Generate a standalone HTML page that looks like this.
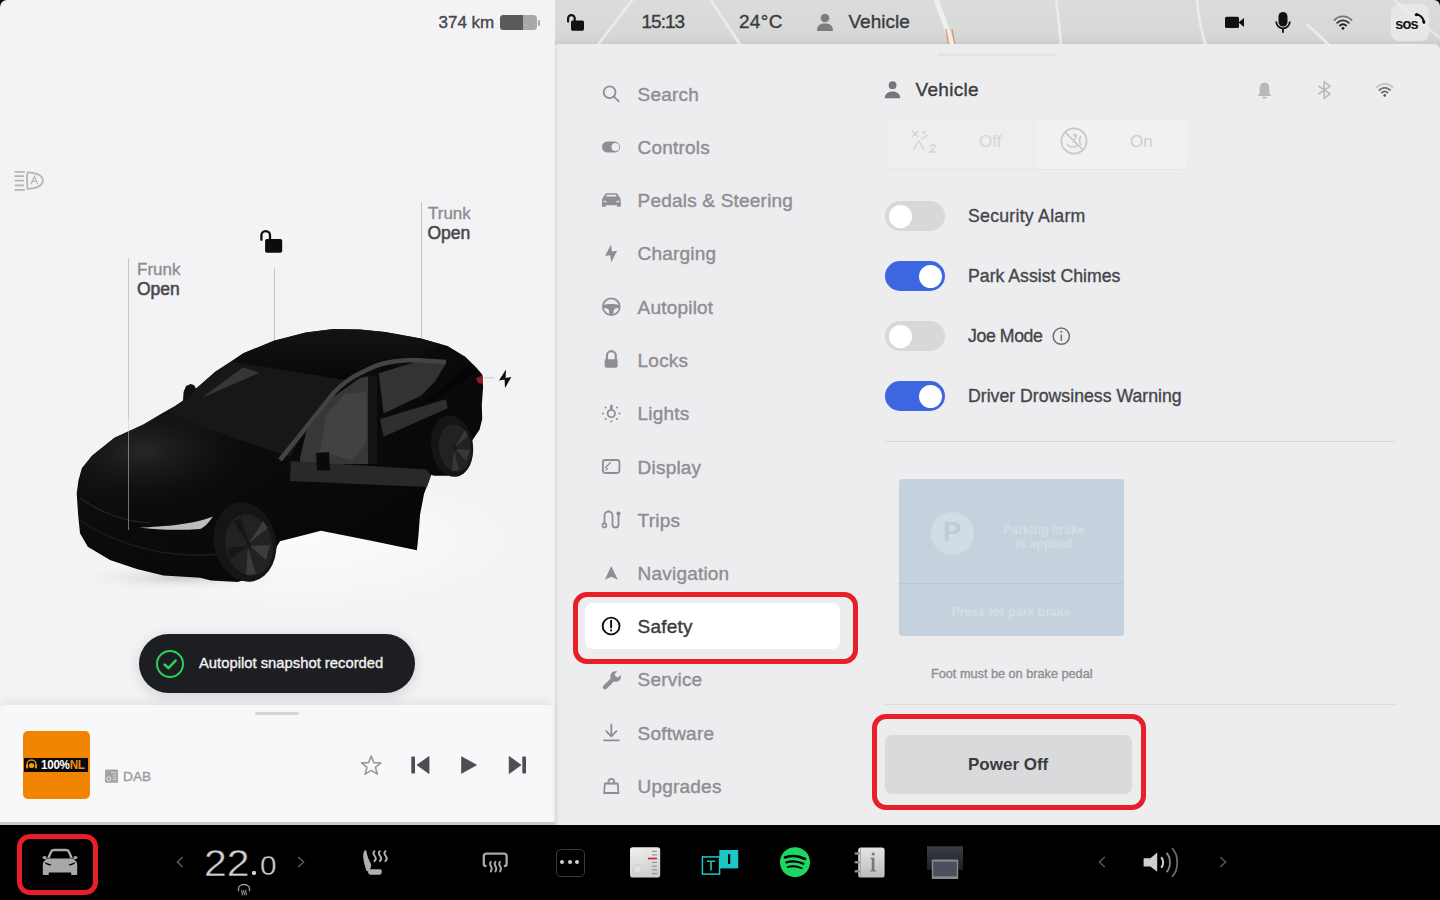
<!DOCTYPE html>
<html><head><meta charset="utf-8">
<style>
*{margin:0;padding:0;box-sizing:border-box}
html,body{width:1440px;height:900px;overflow:hidden;background:#000;font-family:"Liberation Sans",sans-serif;position:relative}
.a{position:absolute}
.t{position:absolute;white-space:nowrap;line-height:1}
.med{-webkit-text-stroke:0.35px currentColor}
#left{position:absolute;left:0;top:0;width:555px;height:825px;background:#f3f3f5;border-top-left-radius:7px;overflow:hidden}
#topbar{position:absolute;left:555px;top:0;width:885px;height:50px;background:#dcdddd;overflow:hidden}
#panel{position:absolute;left:555px;top:44px;width:885px;height:781px;background:#ededf0;border-top-left-radius:4px;border-top-right-radius:6px}
#bottom{position:absolute;left:0;top:825px;width:1440px;height:75px;background:#000}
.menu{position:absolute;left:637.6px;font-size:19px;color:#8e8e93;white-space:nowrap;line-height:1;-webkit-text-stroke:0.4px currentColor;letter-spacing:0.2px}
.mi{position:absolute;overflow:visible}
.lbl{position:absolute;left:968px;font-size:17.7px;color:#46464b;white-space:nowrap;line-height:1;-webkit-text-stroke:0.35px currentColor;letter-spacing:0.2px}
.tog{position:absolute;left:885px;width:60px;height:30px;border-radius:15px;background:#d8d8da}
.tog::after{content:"";position:absolute;top:3.5px;left:3.5px;width:23px;height:23px;border-radius:50%;background:#fff}
.tog.on{background:#3d67e0}
.tog.on::after{left:33.5px}
.red{position:absolute;border:5px solid #e81e28}
</style></head><body>
<div id="left"></div>

<div id="bottom"></div>


<!-- ============ TOP BAR ============ -->
<svg class="a" style="left:555px;top:0" width="885" height="60" viewBox="555 0 885 60">
  <defs><linearGradient id="tbg" gradientUnits="userSpaceOnUse" x1="0" y1="0" x2="0" y2="46"><stop offset="0" stop-color="#dbdcdb"/><stop offset="0.7" stop-color="#d7d8d8"/><stop offset="0.88" stop-color="#d2d3d4"/><stop offset="0.97" stop-color="#c8c9ca"/><stop offset="1" stop-color="#c8c9ca"/></linearGradient></defs>
  <rect x="555" y="0" width="885" height="60" fill="url(#tbg)"/>
  <g stroke="#ebebeb" stroke-width="2.8" fill="none" stroke-linecap="butt">
    <path d="M597 46 L633 -1"/>
    <path d="M710 -1 L741 46"/>
    <path d="M1056 -1 Q1059 20 1061 46" stroke-width="2.6"/>
    <path d="M1197 -1 Q1199 25 1206 46" stroke-width="2.6"/>
    <path d="M1307 24 L1330 46" stroke-width="3"/>
  </g>
  <path d="M936 -1 L953 46" stroke="#efefef" stroke-width="5"/>
  <path d="M946 29 L949 46 M952 29 L955 46" stroke="#e8905a" stroke-width="1.3"/>
  <rect x="1391" y="4" width="38" height="37" rx="8" fill="#e7e7e7"/>
  <path d="M1393 -1 L1440 38" stroke="#f0f0f0" stroke-width="2" opacity="0.7"/><path d="M1434 0 H1440 V6 A6 6 0 0 0 1434 0Z" fill="#000"/>
</svg>
<div id="panel"></div>
<!-- lock -->
<svg class="a" style="left:565px;top:13px" width="22" height="20" viewBox="0 0 22 20">
  <path d="M3.1 8.6 V5.35 A3.3 3.3 0 0 1 9.7 5.35 V8.5" stroke="#111" stroke-width="2.2" fill="none" stroke-linecap="round"/>
  <rect x="6" y="7.6" width="13" height="10.1" rx="1.6" fill="#111"/>
</svg>
<div class="t med" style="left:641.5px;top:12px;font-size:19px;letter-spacing:-1px;color:#3c3c3e">15:13</div>
<div class="t med" style="left:739px;top:12px;font-size:19px;color:#3c3c3e;letter-spacing:0.3px">24°C</div>
<svg class="a" style="left:816px;top:13px" width="18" height="19" viewBox="0 0 18 19">
  <circle cx="9" cy="5" r="4.3" fill="#7d7d80"/>
  <path d="M1 18 C1 12 4.5 10.5 9 10.5 C13.5 10.5 17 12 17 18 Z" fill="#7d7d80"/>
</svg>
<div class="t med" style="left:848.5px;top:12px;font-size:19px;color:#3c3c3e">Vehicle</div>
<!-- camera -->
<svg class="a" style="left:1224px;top:15px" width="22" height="15" viewBox="0 0 22 15">
  <rect x="1" y="1.8" width="14" height="11.2" rx="1.5" fill="#111"/>
  <path d="M14.5 7.4 L20 3 V12 Z" fill="#111"/>
</svg>
<!-- mic -->
<svg class="a" style="left:1274px;top:11px" width="18" height="23" viewBox="0 0 18 23">
  <rect x="4.5" y="1" width="9" height="14.5" rx="4.5" fill="#111"/>
  <path d="M2.2 10.5 a6.8 6.8 0 0 0 13.6 0" stroke="#111" stroke-width="1.8" fill="none"/>
  <path d="M9 17.3 V21.8" stroke="#111" stroke-width="1.8"/>
</svg>
<!-- wifi -->
<svg class="a" style="left:1333px;top:14px" width="20" height="17" viewBox="0 0 20 17">
  <g fill="none" stroke-width="1.8" stroke-linecap="round">
    <path d="M1.5 6 a12 12 0 0 1 17 0" stroke="#777"/>
    <path d="M4.2 8.8 a8 8 0 0 1 11.6 0" stroke="#333"/>
    <path d="M7 11.5 a4.2 4.2 0 0 1 6 0" stroke="#222"/>
  </g>
  <circle cx="10" cy="14.3" r="1.4" fill="#222"/>
</svg>
<div class="t" style="left:1395.3px;top:17.4px;font-size:14.6px;font-weight:bold;color:#151515;letter-spacing:-0.9px">sos</div>
<svg class="a" style="left:1410px;top:9px" width="20" height="18" viewBox="1410 9 20 18">
  <path d="M1416.2 14.8 C1419.8 14.4 1423 17.4 1423.8 21.6" stroke="#111" stroke-width="2.2" fill="none"/>
  <ellipse cx="1416.6" cy="14.6" rx="1.9" ry="1.5" transform="rotate(-20 1416.6 14.6)" fill="#111"/>
  <ellipse cx="1423.8" cy="22" rx="1.5" ry="1.9" transform="rotate(-20 1423.8 22)" fill="#111"/>
</svg>

<!-- ============ LEFT PANEL ============ -->
<div class="t med" style="left:438.5px;top:13.7px;font-size:17px;color:#46464a">374 km</div>
<div class="a" style="left:500px;top:15px;width:37px;height:14.5px;border-radius:3.5px;background:#a9a9ab;overflow:hidden"><div class="a" style="left:0;top:0;width:23px;height:15px;background:#5a5a5c"></div></div>
<div class="a" style="left:537.8px;top:19.5px;width:2px;height:6px;border-radius:1px;background:#a9a9ab"></div>


<!-- headlight icon -->
<svg class="a" style="left:10px;top:166px" width="40" height="30" viewBox="10 166 40 30">
  <g stroke="#b5b5b8" stroke-width="1.8" fill="none">
    <path d="M14.6 171.8 H24.8 M14.6 176.2 H23.9 M14.6 180.7 H23.9 M14.6 185.3 H23.9 M14.6 189.8 H24.8"/>
    <path d="M27.6 172.3 C35 172.3 42.8 175 42.8 180.6 C42.8 186.2 35 188.9 27.6 188.9 C26.8 185 26.8 176 27.6 172.3 Z"/>
  </g>
  <path d="M31 184.2 L34.4 176.2 L37.9 184.2 M32.3 181.4 H36.5" stroke="#b5b5b8" stroke-width="1.2" fill="none"/>
</svg>
<!-- frunk/trunk labels & lines -->

<div class="a" style="left:274px;top:268px;width:1px;height:74px;background:#c6c6c9"></div>
<div class="a" style="left:420.5px;top:202px;width:1px;height:140px;background:#c6c6c9"></div>
<div class="t med" style="left:137px;top:261px;font-size:17px;color:#8d8d91">Frunk</div>
<div class="t" style="left:137px;top:280.5px;font-size:17.5px;color:#48484c;-webkit-text-stroke:0.55px currentColor">Open</div>
<div class="t med" style="left:428px;top:204.5px;font-size:17px;color:#8d8d91">Trunk</div>
<div class="t" style="left:427.5px;top:224.5px;font-size:17.5px;color:#48484c;-webkit-text-stroke:0.55px currentColor">Open</div>
<svg class="a" style="left:258px;top:227px" width="28" height="28" viewBox="0 0 28 28">
  <path d="M3.4 12.8 V8.4 A4.3 4.3 0 0 1 12 8.4 V13" stroke="#0c0c0c" stroke-width="2.3" fill="none" stroke-linecap="round"/>
  <rect x="7.1" y="12.1" width="17.1" height="13.6" rx="1.8" fill="#0c0c0c"/>
</svg>
<!-- car -->
<svg class="a" style="left:0;top:300px" width="555" height="320" viewBox="0 300 555 320">
  <defs>
    <radialGradient id="shadow" cx="0.5" cy="0.5" r="0.5"><stop offset="0" stop-color="#c8c8cc" stop-opacity="0.9"/><stop offset="1" stop-color="#f3f3f5" stop-opacity="0"/></radialGradient>
    <radialGradient id="glow" cx="0.5" cy="0.5" r="0.5"><stop offset="0" stop-color="#fbfbfc" stop-opacity="1"/><stop offset="0.6" stop-color="#f8f8f9" stop-opacity="0.7"/><stop offset="1" stop-color="#f3f3f5" stop-opacity="0"/></radialGradient>
    <linearGradient id="hood" x1="0" y1="0" x2="1" y2="1"><stop offset="0" stop-color="#161616"/><stop offset="0.45" stop-color="#0b0b0b"/><stop offset="1" stop-color="#050505"/></linearGradient>
    <linearGradient id="roofg" x1="0" y1="0" x2="0" y2="1"><stop offset="0" stop-color="#141414"/><stop offset="1" stop-color="#070707"/></linearGradient>
  </defs>
  <ellipse cx="300" cy="540" rx="250" ry="80" fill="url(#glow)"/>
  <ellipse cx="180" cy="578" rx="110" ry="14" fill="url(#shadow)"/>
  <path fill="url(#hood)" d="M76.7 493.3 L78.5 480.0 L82.0 468.0 L92.2 455.6 L114.4 437.8 L143.3 424.4 L160.0 414.4 L175.0 406.0 L183.0 400.6 L183.6 392.0 L186.0 386.0 L190.6 383.9 L194.0 385.0 L196.0 388.5 L215.6 371.4 L243.3 353.3 L273.9 340.8 L305.8 332.5 L333.6 329.0 L360.0 329.5 L385.0 332.0 L420.9 338.5 L447.6 346.0 L465.3 356.7 L476.0 367.3 L482.2 374.4 L483.1 386.9 L481.8 404.7 L482.2 418.9 L479.6 429.6 L472.4 440.2 L468.9 454.4 L461.8 468.7 L447.6 475.8 L435.0 475.8 L431.0 475.0 L424.0 494.0 L420.0 515.0 L418.5 535.0 L416.9 550.2 L370.0 540.5 L320.9 530.7 L280.0 541.3 L276.5 547.0 L273.3 561.0 L259.0 575.0 L237.8 582.0 L211.0 580.4 L200.0 577.8 L163.3 575.6 L136.7 568.9 L110.0 560.0 L87.8 546.7 L80.0 533.3 L78.2 515.6 Z"/>
  <clipPath id="bodyclip"><path d="M76.7 493.3 L78.5 480.0 L82.0 468.0 L92.2 455.6 L114.4 437.8 L143.3 424.4 L160.0 414.4 L175.0 406.0 L183.0 400.6 L183.6 392.0 L186.0 386.0 L190.6 383.9 L194.0 385.0 L196.0 388.5 L215.6 371.4 L243.3 353.3 L273.9 340.8 L305.8 332.5 L333.6 329.0 L360.0 329.5 L385.0 332.0 L420.9 338.5 L447.6 346.0 L465.3 356.7 L476.0 367.3 L482.2 374.4 L483.1 386.9 L481.8 404.7 L482.2 418.9 L479.6 429.6 L472.4 440.2 L468.9 454.4 L461.8 468.7 L447.6 475.8 L435.0 475.8 L431.0 475.0 L424.0 494.0 L420.0 515.0 L418.5 535.0 L416.9 550.2 L370.0 540.5 L320.9 530.7 L280.0 541.3 L276.5 547.0 L273.3 561.0 L259.0 575.0 L237.8 582.0 L211.0 580.4 L200.0 577.8 L163.3 575.6 L136.7 568.9 L110.0 560.0 L87.8 546.7 L80.0 533.3 L78.2 515.6 Z"/></clipPath>
  <radialGradient id="hoodhl" cx="0.3" cy="0.35" r="0.6"><stop offset="0" stop-color="#2a2a2a" stop-opacity="0.9"/><stop offset="1" stop-color="#0b0b0b" stop-opacity="0"/></radialGradient>
  <path clip-path="url(#bodyclip)" fill="url(#hoodhl)" d="M80 473 C85 455 100 440 130 428 L168.6 412.6 C200 426 240 440 290 457 L280 470 C250 490 210 510 150 522 C120 520 95 505 82 495 Z"/>
  <path clip-path="url(#bodyclip)" d="M80 498 C100 512 125 522 150 523" stroke="#262626" stroke-width="1.2" fill="none"/>
  <path clip-path="url(#bodyclip)" d="M80 520 C95 532 125 545 160 552 C190 556 215 556 228 552" stroke="#1c1c1c" stroke-width="1.5" fill="none"/>
  <path fill="url(#roofg)" d="M232 361.7 L243.3 353.3 L273.9 340.8 L305.8 332.5 L333.6 329 L360 329.5 L385 332 L420.9 338.5 L440 344 L413 360 L386.7 362.7 L360 373.3 L345 380 L290 371 Z" opacity="0.9"/>
  <path fill="#171718" d="M168.6 412.6 L184.0 401.0 L196.0 389.0 L215.6 371.4 L232.0 361.7 L290.0 371.0 L345.0 380.0 L333.3 393.3 L306.7 426.7 L290.0 457.0 L240.0 440.0 L200.0 426.0 Z"/>
  <path fill="#363637" d="M201.7 397.8 L243.3 367.2 L259.3 372.8 L208.6 395 Z"/>
  <path fill="#373738" d="M300.0 458.0 L306.7 430.0 L333.3 397.0 L360.0 378.0 L369.0 376.0 L369.0 464.0 L300.0 464.0 Z"/>
  <path fill="#424243" d="M320.0 452.0 L326.0 415.0 L345.0 394.0 L366.0 392.0 L366.0 444.0 L352.0 460.0 Z"/>
  <rect x="368" y="376" width="9" height="88" fill="#141414"/>
  <path fill="#333334" d="M378.7 373.3 L415.6 362.0 L445.8 363.8 L435.0 381.6 L420.9 395.8 L383.6 413.6 Z"/>
  <path fill="#050505" d="M424.0 403.0 L468.0 366.0 L477.0 371.0 L436.0 400.0 Z"/>
  <path fill="#2f2f30" d="M380.0 418.9 L445.8 399.3 L447.6 408.2 L383.6 436.7 Z"/>
  <path d="M280 460 L306.7 426.7 L333.3 393.3 C342 384 350 378 360 373.3 C370 368 378 364 386.7 362.7 C396 361 405 360 413.3 360 L446 362" stroke="#444445" stroke-width="4.5" fill="none" stroke-linejoin="round"/>
  <path fill="#292929" d="M290.7 461.0 L426.7 469.5 L431.0 475.6 L427.0 487.0 L290.0 481.0 Z"/>
  <path fill="#0a0a0a" d="M316 453 L329 452 L330 471 L317 470 Z"/>
  <ellipse cx="245" cy="542" rx="31" ry="40" transform="rotate(-12 245 542)" fill="#151515"/>
  <ellipse cx="249" cy="545" rx="23.5" ry="31" transform="rotate(-12 249 545)" fill="#222223"/>
  <g fill="#3c3c3d">
    <path d="M249 543 L263 521 L268 528 Z"/>
    <path d="M250 546 L270 545 L266 560 Z"/>
    <path d="M248 548 L256 574 L246 575 Z"/>
  </g>
  <g fill="#161616">
    <path d="M249 544 L233 521 L241 518 Z"/>
    <path d="M248 546 L229 560 L228 548 Z"/>
  </g>
  <circle cx="248.5" cy="545" r="3" fill="#1a1a1a"/>
  <ellipse cx="452" cy="446" rx="21" ry="31" transform="rotate(-8 452 446)" fill="#151515"/>
  <ellipse cx="455" cy="448" rx="16" ry="24" transform="rotate(-8 455 448)" fill="#222223"/>
  <g fill="#383839">
    <path d="M455 447 L465 430 L468 436 Z"/>
    <path d="M455 449 L470 450 L466 461 Z"/>
    <path d="M454 450 L459 470 L452 471 Z"/>
  </g>
  <circle cx="455" cy="448" r="2.2" fill="#1a1a1a"/>
  <path d="M139 527.5 C165 526.5 195 524 213 516.4 C209 522 205 527 200 529 C180 530.5 158 530 139 527.5 Z" fill="#bdbdbe"/>
  <path d="M476 378 L482.8 375.5 L482.8 384 L478 383 Z" fill="#8b1a22"/>
  <path d="M484 377.8 H494" stroke="#c4c8c6" stroke-width="1"/>
  <path d="M506 369.4 L498.9 380.6 L504.6 379.6 L505 388 L511.4 377 L505.6 378 Z" fill="#0c0c0c"/>
</svg>

<div class="a" style="left:127.5px;top:258px;width:1px;height:272px;background:#c6c6c9;opacity:0.55"></div>
<div class="a" style="left:127.5px;top:258px;width:1px;height:160px;background:#c6c6c9"></div>
<!-- left panel divider shadow -->
<div class="a" style="left:555px;top:48px;width:5px;height:777px;background:linear-gradient(90deg,rgba(0,0,0,0.09),rgba(0,0,0,0.03) 40%,rgba(0,0,0,0))"></div>

<!-- ============ MENU ============ -->
<div class="menu" style="top:84.8px">Search</div>
<div class="menu" style="top:137.8px">Controls</div>
<div class="menu" style="top:190.8px">Pedals &amp; Steering</div>
<div class="menu" style="top:243.8px">Charging</div>
<div class="menu" style="top:297.8px">Autopilot</div>
<div class="menu" style="top:350.8px">Locks</div>
<div class="menu" style="top:403.8px">Lights</div>
<div class="menu" style="top:457.8px">Display</div>
<div class="menu" style="top:510.8px">Trips</div>
<div class="menu" style="top:563.8px">Navigation</div>
<div class="a" style="left:585px;top:603.3px;width:255px;height:46px;background:#fff;border-radius:8px"></div>
<div class="menu" style="top:616.8px;color:#3a3a3d">Safety</div>
<div class="menu" style="top:669.8px">Service</div>
<div class="menu" style="top:723.8px">Software</div>
<div class="menu" style="top:776.8px">Upgrades</div>

<!-- menu icons -->
<svg class="a" style="left:595px;top:78px" width="35" height="722" viewBox="595 78 35 722">
  <g fill="none" stroke="#8e8e93" stroke-width="1.8" stroke-linecap="round" stroke-linejoin="round">
    <circle cx="609.6" cy="92.2" r="5.9"/>
    <path d="M614 96.6 L618.8 101.4"/>
    <circle cx="611.3" cy="306.7" r="8.4"/>
    <path d="M606.9 359.5 V355.6 a4.45 4.45 0 0 1 8.9 0 V359.5" stroke-width="2.1"/>
    <circle cx="611.3" cy="413.6" r="3.7"/>
    <rect x="602.9" y="460" width="16.5" height="13" rx="2.4"/>
    <path d="M605.5 467.5 L610.5 462.5 M606 470 L607.5 468.5" stroke-width="1.3"/>
    <path d="M604.5 525 V515.5 a4 4 0 0 1 8 0 V524.5 a3 3 0 0 0 6 0 V514"/>
    <path d="M611.3 724.5 V736 M606.2 731.2 L611.3 736.3 L616.4 731.2 M603.9 740.3 H618.8"/>
    <path d="M608.4 783.6 V781.8 a2.9 2.9 0 0 1 5.8 0 V783.6"/>
    <path d="M604.9 783.5 H617.7 L618.5 793 H604.1 Z"/>
  </g>
  <g fill="#8e8e93">
    <rect x="602" y="141.5" width="18" height="11" rx="5.5"/>
    <path d="M602.4 198.6 L604.8 194.8 C605.5 193.7 606.3 193.3 607.6 193.3 H615.2 C616.5 193.3 617.3 193.7 618 194.8 L620.4 198.6 C620.6 199 620.8 199.8 620.8 200.4 V205.8 C620.8 206.4 620.5 206.8 619.9 206.8 H617.6 C617.1 206.8 616.8 206.4 616.8 205.8 V205.2 H605.9 V205.8 C605.9 206.4 605.6 206.8 605.1 206.8 H602.8 C602.2 206.8 602 206.4 602 205.8 V200.4 C602 199.8 602.2 199 602.4 198.6 Z"/>
    <path d="M610.9 244.6 L605.1 255.9 L610 255.3 L611.3 262.3 L617.1 250.8 L612 251.5 Z"/>
    <path d="M603.4 305 C606 304.2 609 304 611.3 304 C613.6 304 616.6 304.2 619.2 305 L619 308 C616.5 308 614.5 308.6 613.6 310.5 L613.2 315 H609.4 L609 310.5 C608.1 308.6 606.1 308 603.6 308 Z"/>
    <path d="M604.7 359.2 H617.6 V365.8 C617.6 367 617 367.8 615.6 367.8 H606.7 C605.4 367.8 604.7 367 604.7 365.8 Z"/>
    <rect x="610.1" y="404.9" width="2.5" height="4.5"/>
    <circle cx="605.6" cy="407.6" r="1"/><circle cx="617" cy="407.6" r="1"/>
    <circle cx="603" cy="413.4" r="1"/><circle cx="619.5" cy="413.4" r="1"/>
    <circle cx="605.6" cy="419" r="1"/><circle cx="617" cy="419" r="1"/>
    <circle cx="611.3" cy="421.5" r="1"/>
    <circle cx="618.5" cy="513.6" r="2.1"/>
    <path d="M611.3 565.9 L617.8 579.8 L611.3 576.8 L604.8 579.8 Z"/>
    <path d="M603.4 685.6 L610.6 678.4 C609.8 675.4 611 672.6 613.6 671.6 C614.8 671.1 616.2 671.1 617.2 671.4 L614.6 674 L615.6 676.6 L618.2 677.6 L620.8 675 C621.1 676.1 621 677.5 620.6 678.6 C619.6 681.2 616.8 682.4 613.8 681.6 L606.6 688.8 C605.7 689.7 604.4 689.7 603.5 688.8 C602.6 687.9 602.5 686.5 603.4 685.6 Z"/>
  </g>
  <circle cx="615.4" cy="147" r="3.9" fill="#ededf0"/>
  <path d="M606 196.5 L607 194.8 H615.8 L616.8 196.5 Z" fill="#ededf0"/>
  <path d="M603.2 200.4 L606.8 201.4 L606.4 202.4 C605 202.2 603.8 201.8 603.2 201.2 Z M619.6 200.4 L616 201.4 L616.4 202.4 C617.8 202.2 619 201.8 619.6 201.2 Z" fill="#ededf0"/>
  <circle cx="604.4" cy="525.4" r="2" fill="#ededf0" stroke="#8e8e93" stroke-width="1.6"/>
  <!-- safety -->
  <circle cx="611.1" cy="626" r="8.4" fill="none" stroke="#111" stroke-width="1.9"/>
  <path d="M611.1 620.6 V627.6" stroke="#111" stroke-width="1.9" stroke-linecap="round"/>
  <circle cx="611.1" cy="630.4" r="1.05" fill="#111"/>
</svg>

<div class="red" style="left:573px;top:592px;width:285px;height:72px;border-radius:14px"></div>

<!-- ============ CONTENT ============ -->
<div class="tog" style="top:201px"></div><div class="lbl" style="top:207.5px;letter-spacing:0.25px">Security Alarm</div>
<div class="tog on" style="top:261px"></div><div class="lbl" style="top:267.5px;letter-spacing:0px">Park Assist Chimes</div>
<div class="tog" style="top:321px"></div><div class="lbl" style="top:327.5px;letter-spacing:-0.4px">Joe Mode</div>
<div class="tog on" style="top:381px"></div><div class="lbl" style="top:387.5px;letter-spacing:0px">Driver Drowsiness Warning</div>
<div class="a" style="left:885px;top:441px;width:510px;height:1px;background:#d6d6d9"></div>

<div class="a" style="left:899px;top:479px;width:225px;height:157px;background:#c5d2dd;border-radius:3px"></div>
<div class="a" style="left:899px;top:583px;width:225px;height:1px;background:#b9c7d2"></div>

<!-- panel header -->
<div class="a" style="left:937.5px;top:52.8px;width:118px;height:3px;border-radius:1.5px;background:#e4e4e7"></div>
<svg class="a" style="left:880px;top:75px" width="25" height="28" viewBox="880 75 25 28">
  <circle cx="892.6" cy="85.2" r="3.9" fill="#77777b"/>
  <path d="M884.8 98.2 C884.8 93.6 888 91.4 892.6 91.4 C897.2 91.4 900.2 93.6 900.2 98.2 Z" fill="#77777b"/>
</svg>
<div class="t med" style="left:915.5px;top:79.8px;font-size:19px;color:#3c3c3f;letter-spacing:0.3px">Vehicle</div>
<svg class="a" style="left:1250px;top:75px" width="150" height="30" viewBox="1250 75 150 30">
  <path d="M1264.5 82.4 C1261 82.4 1259.6 85.3 1259.6 89 V93.4 L1257.7 96 H1271.3 L1269.4 93.4 V89 C1269.4 85.3 1268 82.4 1264.5 82.4 Z" fill="#b9b9bc"/>
  <rect x="1262.3" y="96.8" width="4.4" height="1.6" rx="0.8" fill="#b9b9bc"/>
  <path d="M1318.3 85.8 L1330 93.6 L1324.2 98.4 V81.6 L1330 86.4 L1318.3 94.2" stroke="#b9b9bc" stroke-width="1.6" fill="none" stroke-linejoin="round"/>
  <g fill="none" stroke-linecap="round">
    <path d="M1376.8 87.2 a11 11 0 0 1 15.8 0" stroke="#c4c4c6" stroke-width="1.8"/>
    <path d="M1379.4 90 a7.4 7.4 0 0 1 10.6 0" stroke="#78787b" stroke-width="1.8"/>
    <path d="M1381.9 92.7 a3.8 3.8 0 0 1 5.6 0" stroke="#66666a" stroke-width="1.8"/>
  </g>
  <circle cx="1384.7" cy="95.4" r="1.3" fill="#555"/>
</svg>
<!-- faded segmented control -->
<div class="a" style="left:885px;top:120px;width:302px;height:48.5px;border-radius:5px;background:#eeeef0;box-shadow:0 1px 1px rgba(0,0,0,0.03)"></div>
<div class="a" style="left:1036.5px;top:120px;width:150px;height:48.5px;border-radius:5px;background:#f1f1f2"></div>
<div class="t" style="left:979px;top:132.5px;font-size:17px;color:#d4d4d6">Off</div>
<div class="t" style="left:1130px;top:132.5px;font-size:17px;color:#cdcdcf">On</div>
<svg class="a" style="left:908px;top:127px" width="34" height="30" viewBox="908 127 34 30">
  <g stroke="#d2d2d4" stroke-width="1.3" fill="none">
    <path d="M912 131 L918 137 M918 131 L912 137"/>
    <path d="M913 150 L919 141 L924 150 M921 139 L928 135"/>
    <path d="M930 147 C931 144 935 144 935 146.5 C935 148 932 150 930 152 H935.5"/>
  </g>
  <circle cx="924" cy="132.5" r="1.6" fill="#d2d2d4"/>
</svg>
<svg class="a" style="left:1058px;top:125px" width="32" height="32" viewBox="1058 125 32 32">
  <circle cx="1074" cy="141" r="12.6" fill="none" stroke="#c6c6c8" stroke-width="1.6"/>
  <path d="M1065 132 L1083 150" stroke="#c6c6c8" stroke-width="1.6"/>
  <path d="M1067 144 C1070 148 1075 148 1078 145 M1077 134.5 L1073 143 M1081 136 C1079 138 1079 142 1081 145" stroke="#c6c6c8" stroke-width="1.4" fill="none"/>
  <circle cx="1074.5" cy="135" r="1.4" fill="#c6c6c8"/>
</svg>
<!-- joe mode info -->
<svg class="a" style="left:1050px;top:325px" width="22" height="22" viewBox="1050 325 22 22">
  <circle cx="1061.3" cy="336.2" r="8.1" fill="none" stroke="#6e6e72" stroke-width="1.5"/>
  <path d="M1061.3 334.4 V340.8" stroke="#6e6e72" stroke-width="1.5"/>
  <circle cx="1061.3" cy="331.8" r="1" fill="#6e6e72"/>
</svg>
<!-- parking brake content -->
<div class="a" style="left:931px;top:511.5px;width:43px;height:43px;border-radius:50%;background:#d2dce5"></div>
<div class="t" style="left:943px;top:519px;font-size:27px;font-weight:bold;color:#bfcbd5">P</div>
<div class="t" style="left:994px;top:523px;width:100px;text-align:center;font-size:12.3px;font-weight:bold;color:#d3dde5;line-height:14px">Parking brake<br>is applied</div>
<div class="t" style="left:951px;top:605.5px;width:120px;text-align:center;font-size:12.3px;font-weight:bold;color:#d3dde5">Press for park brake</div>

<div class="t med" style="left:931px;top:668px;font-size:12.7px;color:#8e8e91">Foot must be on brake pedal</div>
<div class="a" style="left:885px;top:703.5px;width:510px;height:1px;background:#dcdcdf"></div>
<div class="a" style="left:885px;top:735px;width:247px;height:59px;background:#dadadc;border-radius:7px"></div>
<div class="t" style="left:968px;top:756px;font-size:17px;font-weight:bold;color:#3a3a3d">Power Off</div>
<div class="red" style="left:872px;top:714px;width:274px;height:96px;border-radius:14px"></div>

<!-- ============ TOAST ============ -->
<div class="a" style="left:139px;top:634px;width:276px;height:59px;border-radius:30px;background:#1d1e21;box-shadow:0 3px 14px rgba(0,0,0,0.14)"></div>
<div class="a" style="left:155.5px;top:650px;width:28px;height:28px;border-radius:50%;border:2.5px solid #2fce5a"></div>
<svg class="a" style="left:155.5px;top:650px" width="28" height="28" viewBox="0 0 28 28"><path d="M8.6 14.5 L12.4 18.2 L19.6 10.6" stroke="#2fce5a" stroke-width="2.5" fill="none" stroke-linecap="round" stroke-linejoin="round"/></svg>
<div class="t med" style="left:199px;top:656px;font-size:14.8px;color:#f2f2f2">Autopilot snapshot recorded</div>

<!-- ============ MEDIA CARD ============ -->
<div class="a" style="left:0;top:705px;width:553px;height:117px;background:#f8f8fa;border-top-right-radius:5px;border-top-left-radius:5px;box-shadow:0 -4px 10px rgba(0,0,0,0.06)"></div>
<div class="a" style="left:0;top:822px;width:555px;height:3px;background:#c9c9cb"></div>
<div class="a" style="left:255px;top:712px;width:44px;height:3px;border-radius:2px;background:#d5d5d8"></div>
<div class="a" style="left:22.5px;top:731px;width:67.5px;height:67.5px;background:#f18500;border-radius:5px;overflow:hidden">
  <div class="a" style="left:1.7px;top:27px;width:63.8px;height:13.6px;background:#0a0a0a"></div>
</div>
<svg class="a" style="left:25px;top:759px" width="13" height="12" viewBox="0 0 13 12">
  <path d="M2 7 V5.5 a4.5 4.5 0 0 1 9 0 V7" stroke="#e98a1a" stroke-width="1.4" fill="none"/>
  <rect x="1" y="5.5" width="2.2" height="4" rx="1" fill="#e98a1a"/><rect x="9.8" y="5.5" width="2.2" height="4" rx="1" fill="#e98a1a"/>
  <circle cx="6.5" cy="6.5" r="2.6" fill="#d9a020"/>
</svg>
<div class="t" style="left:40.5px;top:758px;font-size:13.5px;font-weight:bold;color:#fff;transform:scaleX(0.86);transform-origin:0 0;letter-spacing:-0.3px">100%<span style="color:#f08a10">NL</span></div>
<svg class="a" style="left:104px;top:769px" width="15" height="15" viewBox="0 0 15 15">
  <rect x="1" y="0.6" width="13" height="13.2" rx="1.2" fill="#a3a3a6"/>
  <circle cx="4.8" cy="9.8" r="2" fill="none" stroke="#e8e8ea" stroke-width="1"/>
  <path d="M9 6 H12.6 M9 8.3 H12.6 M9 10.6 H12.6 M7 3.5 H12.6" stroke="#e8e8ea" stroke-width="0.7"/>
</svg>
<!-- media controls -->
<svg class="a" style="left:355px;top:750px" width="180" height="30" viewBox="355 750 180 30">
  <path d="M371.2 756 L373.8 762.6 L380.9 762.9 L375.4 767.3 L377.3 774.2 L371.2 770.3 L365.1 774.2 L367 767.3 L361.5 762.9 L368.6 762.6 Z" fill="none" stroke="#9a9a9d" stroke-width="1.6" stroke-linejoin="round"/>
  <rect x="411.3" y="756.5" width="3.7" height="17.1" rx="0.8" fill="#4e4e52"/>
  <path d="M429 756.5 V773.6 L417 765 Z" fill="#4e4e52" stroke="#4e4e52" stroke-width="0.8" stroke-linejoin="round"/>
  <path d="M461.6 756.8 V773.3 L476.4 765 Z" fill="#4e4e52" stroke="#4e4e52" stroke-width="0.8" stroke-linejoin="round"/>
  <path d="M509.2 756.5 V773.6 L521 765 Z" fill="#4e4e52" stroke="#4e4e52" stroke-width="0.8" stroke-linejoin="round"/>
  <rect x="522.3" y="756.5" width="3.7" height="17.1" rx="0.8" fill="#4e4e52"/>
</svg>
<div class="t med" style="left:123px;top:770px;font-size:13.7px;color:#9a9a9d">DAB</div>

<!-- ============ BOTTOM BAR ============ -->
<div class="red" style="left:17px;top:833.5px;width:81px;height:61px;border-radius:13px"></div>
<div class="t" style="left:204.2px;top:845.5px;font-size:36.5px;color:#cfcfcf;-webkit-text-stroke:0.45px #000;transform:scaleX(1.12);transform-origin:0 0">22</div>
<div class="a" style="left:252.3px;top:871px;width:4.2px;height:4.4px;border-radius:1.4px;background:#cfcfcf"></div>
<div class="t" style="left:259.6px;top:853.2px;font-size:27px;color:#cfcfcf;-webkit-text-stroke:0.35px #000;transform:scaleX(1.1);transform-origin:0 0">0</div>


<!-- car icon -->
<svg class="a" style="left:35px;top:840px" width="50" height="45" viewBox="35 840 50 45">
  <path d="M48.4 858 L51.2 851.5 C51.8 850.4 52.8 850 54 850 H66 C67.2 850 68.2 850.4 68.8 851.5 L71.6 858" stroke="#a8a8a8" stroke-width="2.4" fill="none"/>
  <ellipse cx="44.6" cy="857.6" rx="2" ry="1.6" fill="#a8a8a8"/><ellipse cx="75.4" cy="857.6" rx="2" ry="1.6" fill="#a8a8a8"/>
  <path d="M46.5 858.5 H73.5 L76.5 862 C77 862.8 77.2 863.8 77.2 865 V874 C77.2 874.7 76.8 875.1 76.1 875.1 H72.2 C71.5 875.1 71.2 874.7 71.2 874 V872.6 H48.8 V874 C48.8 874.7 48.5 875.1 47.8 875.1 H43.9 C43.2 875.1 42.8 874.7 42.8 874 V865 C42.8 863.8 43 862.8 43.5 862 Z" fill="#a8a8a8"/>
  <path d="M45 862.2 L51.5 864.8 L50.5 865.4 C48.5 865.2 46.2 864.4 45 863.2 Z M75 862.2 L68.5 864.8 L69.5 865.4 C71.5 865.2 73.8 864.4 75 863.2 Z" fill="#000"/>
</svg>
<div class="t" style="left:176px;top:856px;font-size:0"><svg width="8" height="12" viewBox="0 0 8 12"><path d="M6.8 1 L1.4 6 L6.8 11" stroke="#5a5a5a" stroke-width="1.5" fill="none"/></svg></div>
<div class="t" style="left:297px;top:856px;font-size:0"><svg width="8" height="12" viewBox="0 0 8 12"><path d="M1.2 1 L6.6 6 L1.2 11" stroke="#5a5a5a" stroke-width="1.5" fill="none"/></svg></div>
<svg class="a" style="left:234px;top:882px" width="20" height="16" viewBox="0 0 20 16">
  <path d="M4.5 9.2 V6.5 a5.5 4 0 0 1 11 0 V9.2" stroke="#9a9a9a" stroke-width="1.3" fill="none"/>
  <path d="M8 8 q-0.8 1.3 0 2.6 q0.8 1.3 0 2.6 M10 8 q-0.8 1.3 0 2.6 q0.8 1.3 0 2.6 M12 8 q-0.8 1.3 0 2.6 q0.8 1.3 0 2.6" stroke="#9a9a9a" stroke-width="1.1" fill="none"/>
</svg>
<!-- seat heater -->
<svg class="a" style="left:355px;top:843px" width="40" height="37" viewBox="355 843 40 37">
  <path d="M364.2 851 C365 849.8 366.4 850.2 366.5 851.5 C367 856 369 860 371 864.2 C371.6 866 370.6 869.5 368.4 871 C367.4 871.5 366.6 871.2 366.2 870 C364.8 866 363.4 861 363.2 856.5 C363.1 854.5 363.5 852.3 364.2 851 Z" fill="#b0b0b0"/>
  <path d="M368.2 870.2 C369 869.3 370 869.2 371.5 869.2 H380 C381.3 869.2 381.8 870 381.8 871.6 C381.8 873.6 381 874.7 379.6 874.7 H370.6 C369.2 874.7 368.4 873.8 368.1 872.6 Z" fill="#b0b0b0"/>
  <g stroke="#b0b0b0" stroke-width="1.9" fill="none" stroke-linecap="round">
    <path d="M374.4 851.2 C372.6 852.8 373.6 854.6 374.8 856 C376 857.5 376.2 859.4 374.4 861.2"/>
    <path d="M379.8 851.2 C378 852.8 379 854.6 380.2 856 C381.4 857.5 381.6 859.4 379.8 861.2"/>
    <path d="M385.4 851.2 C383.6 852.8 384.6 854.6 385.8 856 C387 857.5 387.2 859.4 385.4 861.2"/>
  </g>
</svg>
<!-- defrost -->
<svg class="a" style="left:475px;top:845px" width="40" height="35" viewBox="475 845 40 35">
  <path d="M485.6 866 C484.4 866 483.8 865.2 483.8 864 V856.2 C483.8 854.4 484.8 853.6 486.6 853.6 H503.8 C505.6 853.6 506.6 854.4 506.6 856.2 V864 C506.6 865.2 506 866 504.8 866" stroke="#a8a8a8" stroke-width="2.3" fill="none" stroke-linecap="round"/>
  <g stroke="#a8a8a8" stroke-width="1.9" fill="none" stroke-linecap="round">
    <path d="M490.8 861.8 C489.4 863.4 490 865 491 866.4 C492 867.8 492 869.6 490.8 871.4"/>
    <path d="M495.4 861.8 C494 863.4 494.6 865 495.6 866.4 C496.6 867.8 496.6 869.6 495.4 871.4"/>
    <path d="M500 861.8 C498.6 863.4 499.2 865 500.2 866.4 C501.2 867.8 501.2 869.6 500 871.4"/>
  </g>
</svg>
<!-- dots -->
<div class="a" style="left:556px;top:848.5px;width:28.5px;height:28.5px;border:1.8px solid #3c3c3e;border-radius:5px"></div>
<div class="a" style="left:560.4px;top:859.5px;width:4px;height:4px;border-radius:50%;background:#cfcfcf"></div>
<div class="a" style="left:568px;top:859.5px;width:4px;height:4px;border-radius:50%;background:#cfcfcf"></div>
<div class="a" style="left:575.4px;top:859.5px;width:4px;height:4px;border-radius:50%;background:#cfcfcf"></div>
<!-- radio app -->
<svg class="a" style="left:628px;top:845px" width="35" height="35" viewBox="628 845 35 35">
  <defs><linearGradient id="rg" x1="0" y1="0" x2="0.3" y2="1"><stop offset="0" stop-color="#f0f0f0"/><stop offset="1" stop-color="#cfcfcf"/></linearGradient></defs>
  <rect x="630" y="847.2" width="30.2" height="30.3" rx="2.8" fill="url(#rg)"/>
  <circle cx="637.6" cy="869.3" r="4.2" fill="#e2e2e2" stroke="#c4c4c4" stroke-width="0.8"/>
  <g stroke="#8a8a8a" stroke-width="1"><path d="M652 851.3 H657 M652 854.9 H657 M652 862.4 H657 M652 866.2 H657 M652 869.8 H657 M652 873.6 H657"/></g>
  <path d="M648 858.5 H657" stroke="#c8202a" stroke-width="1.6"/>
</svg>
<!-- T I app -->
<svg class="a" style="left:700px;top:848px" width="40" height="28" viewBox="700 848 40 28">
  <rect x="719.3" y="850" width="18.9" height="18.4" fill="#1fc6c6"/>
  <rect x="728" y="854.2" width="2.2" height="9.8" fill="#000"/>
  <rect x="702.4" y="856.9" width="17.2" height="17.2" fill="#000" stroke="#1fc6c6" stroke-width="1.5"/>
  <path d="M707 861.2 H715 M711 861.2 V870.5" stroke="#1fc6c6" stroke-width="1.6"/>
</svg>
<!-- spotify -->
<svg class="a" style="left:778px;top:845px" width="34" height="34" viewBox="778 845 34 34">
  <circle cx="795" cy="862.2" r="15" fill="#1ed760"/>
  <g stroke="#000" stroke-linecap="round" fill="none">
    <path d="M785 857.4 C791 855.4 799 855.8 805 859" stroke-width="2.6"/>
    <path d="M786.4 862.4 C791.5 860.8 798 861.2 803.4 863.8" stroke-width="2.2"/>
    <path d="M787.6 867 C792 865.8 797.4 866.2 801.8 868.2" stroke-width="1.8"/>
  </g>
</svg>
<!-- info app -->
<svg class="a" style="left:852px;top:845px" width="35" height="35" viewBox="852 845 35 35">
  <defs><linearGradient id="ig" x1="0" y1="0" x2="0" y2="1"><stop offset="0" stop-color="#e4e4e4"/><stop offset="1" stop-color="#bdbdbd"/></linearGradient></defs>
  <rect x="858.2" y="847.6" width="26.4" height="29.9" rx="2.6" fill="url(#ig)"/>
  <path d="M860.5 848 V877" stroke="#a0a0a0" stroke-width="0.8"/>
  <g fill="#8c8c8c"><rect x="854.6" y="852.2" width="5.4" height="2.6" rx="1.2"/><rect x="854.6" y="860.9" width="5.4" height="2.6" rx="1.2"/><rect x="854.6" y="870" width="5.4" height="2.6" rx="1.2"/></g>
  <circle cx="873.2" cy="854" r="1.6" fill="#777"/>
  <path d="M870.6 857.8 H874.4 V870.2 H876 V871.6 H870.2 V870.2 H871.8 V859.2 H870.6 Z" fill="#777"/>
</svg>
<!-- screen app -->
<svg class="a" style="left:925px;top:844px" width="40" height="37" viewBox="925 844 40 37">
  <defs><linearGradient id="sg" x1="0" y1="0" x2="0" y2="1"><stop offset="0" stop-color="#3a3e46"/><stop offset="1" stop-color="#1e2024"/></linearGradient></defs>
  <rect x="927" y="846.3" width="36" height="23.6" fill="url(#sg)"/>
  <rect x="931.8" y="859.4" width="26.4" height="19.5" rx="1" fill="#8a8a8a"/>
  <rect x="933.2" y="861.6" width="23.6" height="14.8" fill="#4a505c"/>
</svg>
<!-- volume -->
<div class="t" style="left:1098px;top:856px;font-size:0"><svg width="8" height="12" viewBox="0 0 8 12"><path d="M6.8 1 L1.4 6 L6.8 11" stroke="#555" stroke-width="1.5" fill="none"/></svg></div>
<div class="t" style="left:1219px;top:856px;font-size:0"><svg width="8" height="12" viewBox="0 0 8 12"><path d="M1.2 1 L6.6 6 L1.2 11" stroke="#555" stroke-width="1.5" fill="none"/></svg></div>
<svg class="a" style="left:1140px;top:845px" width="42" height="35" viewBox="1140 845 42 35">
  <path d="M1143.6 858.2 H1150.4 L1157.2 852.5 V871.8 L1150.4 866.6 H1143.6 Z" fill="#cfcfcf"/>
  <path d="M1161.2 857.2 C1163.8 859.8 1163.8 865.2 1161.2 867.8" stroke="#cfcfcf" stroke-width="2" fill="none"/>
  <path d="M1166.6 853 C1171 857.5 1171 867.5 1166.6 872" stroke="#8a8a8a" stroke-width="1.8" fill="none"/>
  <path d="M1172 848.2 C1179 855 1179 870 1172 876.8" stroke="#6a6a6a" stroke-width="1.8" fill="none"/>
</svg>

</body></html>
